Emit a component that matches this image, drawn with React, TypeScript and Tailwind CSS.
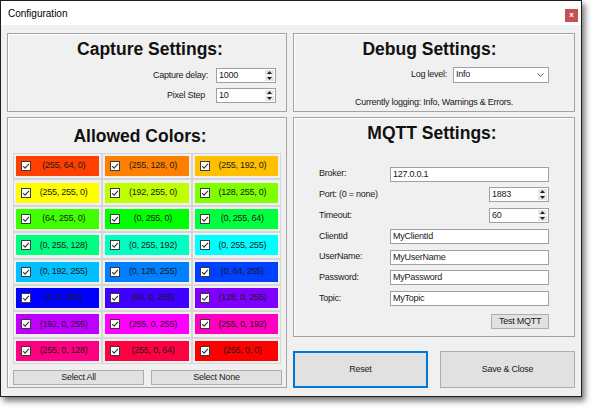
import React from 'react'

const FONT = "font-['Liberation_Sans',Arial,sans-serif]"
const SMALL = 'text-[9px] tracking-[-0.25px] text-[#1a1a1a]'

const colors: [string, string][] = [
  ['(255, 64, 0)', 'bg-[#ff4000]'],
  ['(255, 128, 0)', 'bg-[#ff8000]'],
  ['(255, 192, 0)', 'bg-[#ffc000]'],
  ['(255, 255, 0)', 'bg-[#ffff00]'],
  ['(192, 255, 0)', 'bg-[#c0ff00]'],
  ['(128, 255, 0)', 'bg-[#80ff00]'],
  ['(64, 255, 0)', 'bg-[#40ff00]'],
  ['(0, 255, 0)', 'bg-[#00ff00]'],
  ['(0, 255, 64)', 'bg-[#00ff40]'],
  ['(0, 255, 128)', 'bg-[#00ff80]'],
  ['(0, 255, 192)', 'bg-[#00ffc0]'],
  ['(0, 255, 255)', 'bg-[#00ffff]'],
  ['(0, 192, 255)', 'bg-[#00c0ff]'],
  ['(0, 128, 255)', 'bg-[#0080ff]'],
  ['(0, 64, 255)', 'bg-[#0040ff]'],
  ['(0, 0, 255)', 'bg-[#0000ff]'],
  ['(64, 0, 255)', 'bg-[#4000ff]'],
  ['(128, 0, 255)', 'bg-[#8000ff]'],
  ['(192, 0, 255)', 'bg-[#c000ff]'],
  ['(255, 0, 255)', 'bg-[#ff00ff]'],
  ['(255, 0, 192)', 'bg-[#ff00c0]'],
  ['(255, 0, 128)', 'bg-[#ff0080]'],
  ['(255, 0, 64)', 'bg-[#ff0040]'],
  ['(255, 0, 0)', 'bg-[#ff0000]'],
]

const GroupBox = ({ className, children }: { className: string; children: React.ReactNode }) => (
  <div className={`border border-[#a3a3a3] shadow-[inset_1px_1px_0_#ffffff] ${className}`}>{children}</div>
)

const Title = ({ children, className }: { children: React.ReactNode; className?: string }) => (
  <div className={`text-center text-[17.5px] font-bold leading-[20px] text-[#111] ${className ?? ''}`}>{children}</div>
)

const Check = () => (
  <span className="flex h-[10px] w-[10px] shrink-0 items-center justify-center border border-[#3a3a3a] bg-white">
    <svg width="8" height="8" viewBox="0 0 8 8">
      <path d="M1.2 4.1 L3.1 6.1 L6.9 1.8" fill="none" stroke="#333" strokeWidth="1.1" />
    </svg>
  </span>
)

const Spin = () => (
  <div className="flex w-[11px] flex-col gap-px bg-white p-px">
    <div className="flex flex-1 items-center justify-center bg-[#e6e6e6]">
      <svg width="5" height="3" viewBox="0 0 5 3">
        <path d="M0 3 L2.5 0 L5 3 Z" fill="#222" />
      </svg>
    </div>
    <div className="flex flex-1 items-center justify-center bg-[#e6e6e6]">
      <svg width="5" height="3" viewBox="0 0 5 3">
        <path d="M0 0 L2.5 3 L5 0 Z" fill="#222" />
      </svg>
    </div>
  </div>
)

const NumInput = ({ value }: { value: string }) => (
  <div className="flex h-[15px] w-[60px] border border-[#a0a0a0] bg-white">
    <span className={`flex-1 pl-[2px] leading-[13px] ${SMALL}`}>{value}</span>
    <Spin />
  </div>
)

const TextInput = ({ value }: { value: string }) => (
  <div className={`h-[15px] flex-1 border border-[#a0a0a0] bg-white pl-[2px] leading-[13px] ${SMALL}`}>{value}</div>
)

const Btn = ({ children, className }: { children: React.ReactNode; className: string }) => (
  <div className={`flex items-center justify-center bg-[#e1e1e1] ${SMALL} ${className}`}>{children}</div>
)

const MqttRow = ({ label, value }: { label: string; value: string }) => (
  <div className="flex h-[15px] items-center">
    <span className={`w-[71px] ${SMALL}`}>{label}</span>
    <TextInput value={value} />
  </div>
)

const MqttNumRow = ({ label, value }: { label: string; value: string }) => (
  <div className="flex h-[15px] items-center justify-between">
    <span className={SMALL}>{label}</span>
    <NumInput value={value} />
  </div>
)

export default function App() {
  return (
    <div className={`h-[413px] w-[597px] bg-white ${FONT}`}>
      <div className="flex h-[397px] w-[582px] flex-col border border-[#1e1e1e] shadow-[3px_4px_6px_rgba(0,0,0,0.55)]">
        <div className="flex h-[24px] items-center justify-between bg-white pl-[7px] pr-[3px]">
          <span className="text-[10px] text-black">Configuration</span>
          <span className="mt-[4px] flex h-[13px] w-[13px] items-center justify-center bg-[#c75050] text-[8px] font-bold leading-none text-white">
            x
          </span>
        </div>

        <div className="grid flex-1 grid-cols-[280px_282px] gap-[6px] bg-[#f0f0f0] px-[6px] pb-[8px] pt-[8px]">
          <div className="flex flex-col gap-[5px]">
            <GroupBox className="h-[79px] pt-[4.5px]">
              <Title className="pl-[6px]">Capture Settings:</Title>
              <div className="mt-[9.5px] flex flex-col gap-[5px] pr-[10px]">
                <div className="flex items-center justify-end gap-[8px]">
                  <span className={SMALL}>Capture delay:</span>
                  <NumInput value="1000" />
                </div>
                <div className="flex items-center justify-end gap-[11px]">
                  <span className={SMALL}>Pixel Step</span>
                  <NumInput value="10" />
                </div>
              </div>
            </GroupBox>

            <GroupBox className="flex-1 pl-[5px] pt-[8px]">
              <Title className="pr-[19px]">Allowed Colors:</Title>
              <div className="mt-[7px] grid w-[268px] grid-cols-3 gap-[2px] bg-[#d6d6d6] p-px">
                {colors.map(([label, cls]) => (
                  <div key={label} className="bg-[#f0f0f0] px-[2px] py-[2.2px]">
                    <div className={`flex h-[20px] items-center pl-[5px] pr-[3px] ${cls}`}>
                      <Check />
                      <span className={`flex-1 text-center ${SMALL}`}>{label}</span>
                    </div>
                  </div>
                ))}
              </div>
              <div className="mt-[6px] grid w-[269px] grid-cols-2 gap-[7px]">
                <Btn className="h-[15px] border border-[#adadad]">Select All</Btn>
                <Btn className="h-[15px] border border-[#adadad]">Select None</Btn>
              </div>
            </GroupBox>
          </div>

          <div className="flex flex-col">
            <GroupBox className="h-[79px] pt-[4.5px]">
              <Title className="pr-[9px]">Debug Settings:</Title>
              <div className="mt-[8px] flex items-center justify-end gap-[6px] pr-[25px]">
                <span className={SMALL}>Log level:</span>
                <div className="flex h-[16px] w-[96px] items-center justify-between border border-[#a0a0a0] bg-white pl-[2px] pr-[4px]">
                  <span className={SMALL}>Info</span>
                  <svg width="7" height="4" viewBox="0 0 7 4">
                    <path d="M0.5 0.5 L3.5 3.3 L6.5 0.5" fill="none" stroke="#555" strokeWidth="1" />
                  </svg>
                </div>
              </div>
              <div className={`mt-[13px] text-center leading-[12px] ${SMALL}`}>
                Currently logging: Info, Warnings &amp; Errors.
              </div>
            </GroupBox>

            <GroupBox className="mt-[5px] h-[220px] px-[25px] pt-[4.5px]">
              <Title className="pr-[4px]">MQTT Settings:</Title>
              <div className="mt-[24px] flex flex-col gap-[5.8px]">
                <MqttRow label="Broker:" value="127.0.0.1" />
                <MqttNumRow label="Port: (0 = none)" value="1883" />
                <MqttNumRow label="Timeout:" value="60" />
                <MqttRow label="ClientId" value="MyClientId" />
                <MqttRow label="UserName:" value="MyUserName" />
                <MqttRow label="Password:" value="MyPassword" />
                <MqttRow label="Topic:" value="MyTopic" />
              </div>
              <div className="mt-[8px] flex justify-end">
                <Btn className="h-[15px] w-[58px] border border-[#adadad]">Test MQTT</Btn>
              </div>
            </GroupBox>

            <div className="mt-[14px] grid h-[37px] grid-cols-2 gap-[12px]">
              <Btn className="border-2 border-[#0078d7]">Reset</Btn>
              <Btn className="border border-[#adadad]">Save &amp; Close</Btn>
            </div>
          </div>
        </div>
      </div>
    </div>
  )
}
